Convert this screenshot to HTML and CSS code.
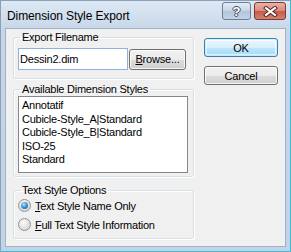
FILE: index.html
```html
<!DOCTYPE html>
<html lang="en">
<head>
    <meta charset="UTF-8">
    <title>Dimension Style Export</title>
    <link rel="stylesheet" href="styles.css">
</head>
<body>
    <div class="window">
        <div class="titlebar">
            <span class="title">Dimension Style Export</span>
            <div class="caption-buttons">
                <span class="caption help">?</span>
                <span class="caption close">
                    <svg width="15" height="11" viewBox="0 0 15 11">
                        <path d="M3 2 L12 9 M12 2 L3 9" stroke="#4a1f1a" stroke-width="4" stroke-linecap="square"/>
                        <path d="M3 2 L12 9 M12 2 L3 9" stroke="#fff" stroke-width="2.2" stroke-linecap="square"/>
                    </svg>
                </span>
            </div>
        </div>

        <div class="client">
            <div class="main">
                <fieldset class="group group-file">
                    <legend>Export Filename</legend>
                    <div class="file-row">
                        <input type="text" class="file-input" value="Dessin2.dim">
                        <button class="btn browse"><u>B</u>rowse...</button>
                    </div>
                </fieldset>

                <fieldset class="group group-styles">
                    <legend>Available Dimension Styles</legend>
                    <ul class="listbox">
                        <li>Annotatif</li>
                        <li>Cubicle-Style_A|Standard</li>
                        <li>Cubicle-Style_B|Standard</li>
                        <li>ISO-25</li>
                        <li>Standard</li>
                    </ul>
                </fieldset>

                <fieldset class="group group-options">
                    <legend>Text Style Options</legend>
                    <label class="radio-row">
                        <span class="radio checked"></span>
                        <span><u>T</u>ext Style Name Only</span>
                    </label>
                    <label class="radio-row">
                        <span class="radio"></span>
                        <span><u>F</u>ull Text Style Information</span>
                    </label>
                </fieldset>
            </div>

            <div class="actions">
                <button class="btn default">OK</button>
                <button class="btn">Cancel</button>
            </div>
        </div>
    </div>
</body>
</html>
```

FILE: styles.css
```css
body {
    margin: 0;
    font-family: 'Liberation Sans', Arial, sans-serif;
    font-size: 11px;
    color: #000;
    background: #fff;
}

.window {
    width: 291px;
    height: 252px;
    box-sizing: border-box;
    border: 1px solid #8a9fb8;
    border-right-color: #3bbcdc;
    border-bottom-color: #3bbcdc;
    padding: 0 4px 4px 4px;
    background: linear-gradient(#dde8f4, #c6d6e8 30px, #c2d3e6);
    display: flex;
    flex-direction: column;
}

/* Title bar */
.titlebar {
    height: 27px;
    display: flex;
    align-items: flex-start;
}

.title {
    font-size: 12px;
    margin-left: 2px;
    margin-top: 8px;
    letter-spacing: -0.1px;
}

.caption-buttons {
    margin-left: auto;
    margin-top: 1px;
    display: flex;
    gap: 3px;
}

.caption {
    height: 18px;
    box-sizing: border-box;
    border: 1px solid #6d7f95;
    border-radius: 3px;
    display: flex;
    align-items: center;
    justify-content: center;
}

.help {
    width: 29px;
    background: linear-gradient(#e4edf6, #c5d4e4 50%, #b3c5d9 51%, #c2d3e6);
    color: #fff;
    font-weight: bold;
    font-size: 13px;
    text-shadow: -1px 0 #3d4f66, 1px 0 #3d4f66, 0 -1px #3d4f66, 0 1px #3d4f66;
}

.close {
    width: 32px;
    border-color: #7a3a32;
    background: linear-gradient(#eab2a5, #d98a79 50%, #c75a48 51%, #d4806d);
}

/* Client area */
.client {
    flex: 1;
    border: 1px solid #9fb2c8;
    background: #f0f0f0;
    display: flex;
    padding: 1px 7px 0 7px;
}

.main {
    width: 181px;
    display: flex;
    flex-direction: column;
}

.group {
    margin: 0;
    border: 1px solid #d5dfe5;
    border-radius: 3px;
    box-shadow: inset 1px 1px #fff, 1px 1px #fff;
    padding: 0 4px;
    min-width: 0;
}

.group legend {
    padding: 0 2px;
    margin-left: 2px;
    line-height: 14px;
    letter-spacing: -0.25px;
}

.group-file {
    padding-top: 4px;
    padding-bottom: 8px;
}

.file-row {
    display: flex;
    align-items: center;
    gap: 1px;
}

.file-input {
    width: 110px;
    height: 22px;
    box-sizing: border-box;
    margin: 0;
    border: 1px solid #8fb2d9;
    padding: 0 1px;
    font-family: inherit;
    font-size: 11px;
    letter-spacing: -0.2px;
    background: #fff;
    outline: none;
}

.btn {
    font-family: inherit;
    font-size: 11px;
    letter-spacing: -0.2px;
    color: #000;
    margin: 0;
    padding: 0;
    box-sizing: border-box;
    border: 1px solid #707070;
    border-radius: 3px;
    background: linear-gradient(#f2f2f2, #ebebeb 50%, #dddddd 51%, #cfcfcf);
    box-shadow: inset 0 0 0 1px rgba(255, 255, 255, 0.8);
}

.browse {
    width: 57px;
    height: 21px;
}

.group-styles {
    margin-top: 3px;
    padding-bottom: 3px;
}

.listbox {
    list-style: none;
    margin: 0;
    padding: 2px 3px 0 3px;
    height: 77px;
    box-sizing: border-box;
    width: 170px;
    border: 1px solid #828790;
    background: #fff;
    line-height: 13.5px;
    letter-spacing: -0.25px;
}

.group-options {
    margin-top: 6px;
    padding-bottom: 5px;
}

.radio-row {
    display: flex;
    align-items: center;
    gap: 4px;
    height: 17px;
    letter-spacing: -0.25px;
}

.radio-row + .radio-row {
    margin-top: 2px;
}

.radio {
    width: 13px;
    height: 13px;
    box-sizing: border-box;
    border-radius: 50%;
    border: 1px solid #939393;
    background: radial-gradient(circle at 40% 35%, #fdfdfd, #d9d9d9 70%, #c8c8c8);
    position: relative;
}

.radio.checked::after {
    content: "";
    position: absolute;
    left: 2px;
    top: 2px;
    width: 7px;
    height: 7px;
    border-radius: 50%;
    background: radial-gradient(circle at 40% 35%, #b9e3fb, #3a8fd2 50%, #1d5d95);
}

/* Buttons column */
.actions {
    margin-left: 10px;
    width: 74px;
    padding-top: 8px;
    display: flex;
    flex-direction: column;
    gap: 9px;
}

.actions .btn {
    height: 19px;
    width: 74px;
}

.btn.default {
    border-color: #3c7fb1;
    background: linear-gradient(#eaf6fd, #d9f0fc 50%, #bee6fd 51%, #a7d9f5);
    box-shadow: inset 0 0 0 1px #48d1ff33, inset 0 0 0 2px rgba(255, 255, 255, 0.6);
}
```
